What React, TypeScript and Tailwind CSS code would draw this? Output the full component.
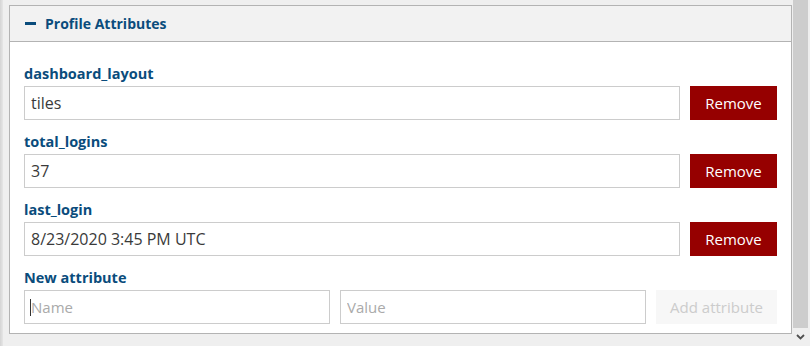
import React from "react";

const font = { fontFamily: "'Open Sans', Lato, sans-serif" };

function AttrRow({ name, value }: { name: string; value: string }) {
  return (
    <div className="mb-[12px]">
      <div className="h-[20px] leading-[20px] text-[14.5px] font-bold text-[#0a4c7c] mb-[2px]">{name}</div>
      <div className="flex gap-[10px]">
        <input
          readOnly
          value={value}
          className="flex-1 h-[34px] border border-[#cccccc] bg-white px-[6px] text-[16px] text-[#3a3a3a] outline-none"
        />
        <button className="w-[87px] h-[34px] bg-[#960000] text-white text-[15px]">Remove</button>
      </div>
    </div>
  );
}

export default function App() {
  return (
    <div className="w-[810px] h-[346px] bg-[#efefef] flex overflow-hidden" style={font}>
      <div className="w-[3px] h-full bg-gradient-to-r from-[#d4d4d4] to-[#e6e6e6]" />
      <div className="flex-1 pl-[6px] pt-[5px]">
        <div className="w-[783px] h-[329px] border border-[#b3b3b3] bg-white flex flex-col">
          <div className="h-[36px] bg-[#f2f2f2] border-b border-[#b3b3b3] flex items-center pl-[15px]">
            <span className="w-[11px] h-[3px] bg-[#0a4c7c] mr-[9px]" />
            <span className="text-[14px] font-bold text-[#0a4c7c]">Profile Attributes</span>
          </div>
          <div className="px-[14px] pt-[22px]">
            <AttrRow name="dashboard_layout" value="tiles" />
            <AttrRow name="total_logins" value="37" />
            <AttrRow name="last_login" value="8/23/2020 3:45 PM UTC" />
            <div>
              <div className="h-[20px] leading-[20px] text-[14.5px] font-bold text-[#0a4c7c] mb-[2px]">New attribute</div>
              <div className="flex gap-[10px]">
                <div className="relative w-[306px]">
                  <input
                    readOnly
                    placeholder="Name"
                    className="w-full h-[34px] border border-[#cccccc] bg-white px-[6px] text-[15px] text-[#333333] placeholder:text-[#aaaaaa] outline-none"
                  />
                  <span className="absolute left-[6px] top-[9px] w-px h-[17px] bg-[#333333]" />
                </div>
                <input
                  readOnly
                  placeholder="Value"
                  className="w-[306px] h-[34px] border border-[#cccccc] bg-white px-[6px] text-[15px] text-[#333333] placeholder:text-[#aaaaaa] outline-none"
                />
                <button className="flex-1 h-[34px] bg-[#f7f7f7] text-[#cccccc] text-[15px]">Add attribute</button>
              </div>
            </div>
          </div>
        </div>
      </div>
      <div className="w-[18px] h-full flex">
        <div className="w-[1px]" />
        <div className="w-[15px] h-full flex flex-col">
          <div className="flex-1 bg-[#cdcdcd]" />
          <div className="h-[18px] flex items-center justify-center">
            <svg width="9" height="6" viewBox="0 0 9 6">
              <path d="M1 1 L4.5 4.5 L8 1" stroke="#505050" strokeWidth="1.8" fill="none" />
            </svg>
          </div>
        </div>
        <div className="w-[2px]" />
      </div>
    </div>
  );
}
